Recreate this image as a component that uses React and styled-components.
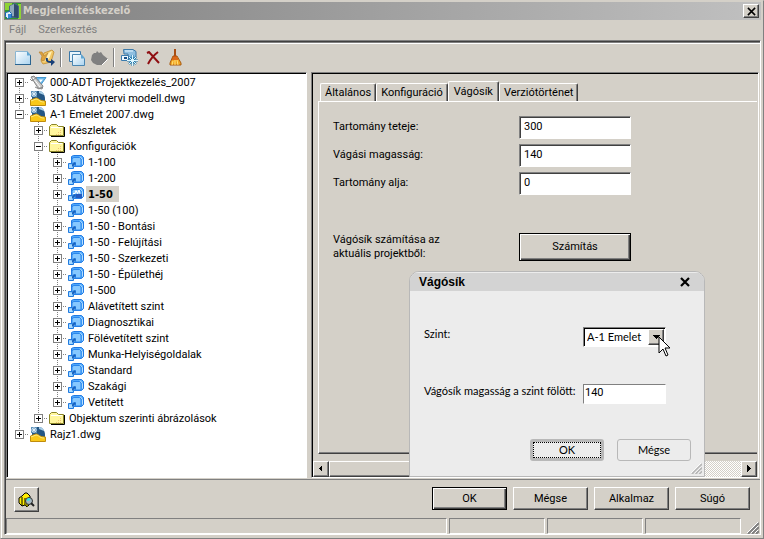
import React, { useState } from "react";
import styled, { createGlobalStyle, css } from "styled-components";

const face = "#d4d0c8";
const uiFont = 'Roboto, "Liberation Sans", sans-serif';
const boldFont = '"DejaVu Sans Condensed", "Liberation Sans", sans-serif';
const dialogFont = 'Lato, "Liberation Sans", sans-serif';
const dialogTitleFont = '"Liberation Sans", Arial, sans-serif';

const GlobalStyle = createGlobalStyle`
  * { box-sizing: border-box; }
  body { margin: 0; background: ${face}; }
  button, input, select { font: inherit; color: inherit; margin: 0; padding: 0; border-radius: 0; }
  svg { display: block; flex: none; }
`;

const raised = css`
  border: 1px solid;
  border-color: #fff #404040 #404040 #fff;
  box-shadow: inset -1px -1px #808080;
  background: ${face};
`;

const Window = styled.div`
  position: relative;
  display: flex;
  flex-direction: column;
  min-height: 100vh;
  padding: 1px 2px 3px 3px;
  border: 1px solid;
  border-color: ${face} #808080 #808080 ${face};
  box-shadow: inset 1px 0 #fff;
  background: ${face};
  color: #000;
  font: 11px/16px ${uiFont};
`;

const TitleBar = styled.header`
  display: flex;
  align-items: center;
  height: 18px;
  padding: 0 2px 0 1px;
  background: linear-gradient(90deg, #808080, #c0c0c0);
`;

const Title = styled.h1`
  flex: 1;
  margin: 0 0 0 2px;
  color: ${face};
  font: bold 11px/18px ${boldFont};
`;

const CloseButton = styled.button`
  ${raised}
  display: grid;
  place-items: center;
  width: 16px;
  height: 14px;
`;

const MenuBar = styled.nav`
  display: flex;
  gap: 12px;
  height: 20px;
  padding-left: 5px;
  color: #808080;
`;

const MenuButton = styled.button`
  border: 0;
  background: none;
  line-height: 20px;
`;

const Frame = styled.main`
  display: flex;
  flex: 1;
  flex-direction: column;
  padding: 1px 0 0 1px;
  border: 1px solid;
  border-color: #808080 #fff #fff #808080;
  box-shadow: inset 1px 1px #404040;
`;

const Toolbar = styled.div`
  display: flex;
  align-items: center;
  height: 30px;
  padding: 0 0 0 6px;
  border-top: 1px solid #808080;
  box-shadow: inset 0 1px #fff;
`;

const ToolButton = styled.button`
  display: grid;
  place-items: center;
  width: 23px;
  height: 22px;
  border: 0;
  background: none;
`;

const Separator = styled.span`
  width: 2px;
  height: 19px;
  margin: 0 3px 0 2px;
  border-left: 1px solid #808080;
  border-right: 1px solid #fff;
`;

const Panes = styled.div`
  display: grid;
  flex: 1;
  grid-template-columns: 301px minmax(0, 1fr);
  gap: 4px;
  padding-right: 1px;
`;

const sunken = css`
  border: 1px solid;
  border-color: #808080 #fff #fff #808080;
  box-shadow: inset 1px 1px #000;
`;

const TreePane = styled.ul`
  ${sunken}
  margin: 0;
  padding: 1px 1px 1px 3px;
  background: #fff;
  list-style: none;
`;

const TreeRow = styled.li`
  display: flex;
  align-items: center;
  height: 16px;
`;

const Guide = styled.span`
  display: grid;
  place-items: center;
  width: 19px;
  height: 16px;
  background-image:
    ${(p) => (p.$branch ? "repeating-linear-gradient(90deg, #808080 0 1px, transparent 1px 2px)," : "")}
    repeating-linear-gradient(#808080 0 1px, transparent 1px 2px);
  background-repeat: no-repeat;
  background-size: ${(p) => (p.$branch ? "10px 1px, " : "")}1px ${(p) => (p.$part === "all" ? "16px" : "8px")};
  background-position: ${(p) => (p.$branch ? "9px 8px, " : "")}9px ${(p) => (p.$part === "lower" ? "8px" : "0")};
`;

const Toggle = styled.button`
  display: grid;
  place-items: center;
  width: 9px;
  height: 9px;
  border: 1px solid #808080;
  background: #fff;
`;

const IconSlot = styled.span`
  display: grid;
  place-items: center;
  width: 18px;
  height: 16px;
`;

const NodeLabel = styled.span`
  margin-left: 1px;
  padding: 2px 3px 0 2px;
  line-height: 14px;
  white-space: nowrap;
  ${(p) => p.$selected && css`
    padding-right: 6px;
    background: ${face};
    font-weight: bold;
    font-family: ${boldFont};
  `}
`;

const DetailPane = styled.section`
  ${sunken}
  display: flex;
  flex-direction: column;
  min-width: 0;
  padding: 8px 1px 0 1px;
`;

const Tabs = styled.div`
  display: flex;
  align-items: flex-end;
  padding-left: 7px;
`;

const Tab = styled.button`
  height: ${(p) => (p.$active ? "21px" : "18px")};
  margin-bottom: ${(p) => (p.$active ? "-1px" : "0")};
  padding: 0 ${(p) => (p.$active ? "5px" : "4px")};
  border: 1px solid;
  border-color: #fff #404040 transparent #fff;
  border-bottom: 0;
  border-radius: 2px 2px 0 0;
  box-shadow: inset -1px 0 #808080;
  background: ${face};
  white-space: nowrap;
`;

const TabPage = styled.form`
  flex: 1;
  margin-left: 5px;
  padding: 11px 14px;
  border-top: 1px solid #fff;
  border-left: 1px solid #fff;
  border-bottom: 1px solid #404040;
  box-shadow: inset 0 -1px #808080;
`;

const FieldRow = styled.div`
  display: grid;
  grid-template-columns: 186px 112px;
  align-items: center;
  min-height: 28px;
  margin-top: ${(p) => (p.$apart ? "36px" : "0")};
  line-height: 14px;
`;

const TextBox = styled.input`
  height: ${(p) => (p.$compact ? "20px" : "23px")};
  width: 100%;
  min-width: 0;
  padding: 0 4px 2px;
  border: 1px solid;
  border-color: #808080 #fff #fff #808080;
  background: #fff;
  box-shadow: inset 1px 1px #404040;
  outline: none;
  ${(p) => p.$compact && css`
    padding: 0 0 3px 1px;
    box-shadow: none;
    font-family: ${uiFont};
  `}
`;

const PushButton = styled.button`
  ${raised}
  height: 23px;
  min-width: 75px;
  ${(p) => p.$primary && css`
    border-color: #000;
    box-shadow: inset 1px 1px #fff, inset -1px -1px #404040, inset -2px -2px #808080;
  `}
  ${(p) => p.$tall && css`
    height: 28px;
  `}
`;

const ScrollBar = styled.div`
  display: flex;
  height: 16px;
  margin-top: 7px;
  background: repeating-conic-gradient(#fff 0 25%, ${face} 0 50%) 0 0 / 2px 2px;
`;

const ScrollButton = styled.button`
  ${raised}
  display: grid;
  place-items: center;
  width: 16px;
`;

const ScrollThumb = styled.div`
  ${raised}
  width: 60%;
`;

const ScrollSpace = styled.div`
  flex: 1;
`;

const Footer = styled.footer`
  display: flex;
  gap: 6px;
  align-items: flex-start;
  height: 39px;
  margin-top: 1px;
  padding: 7px 10px 0 8px;
  border-top: 1px solid #808080;
`;

const SearchButton = styled.button`
  ${raised}
  display: grid;
  place-items: center;
  width: 25px;
  height: 25px;
  margin-right: auto;
`;

const StatusBar = styled.div`
  display: grid;
  grid-template-columns: minmax(0, 1fr) 96px 96px 96px 16px;
  gap: 2px;
  height: 16px;
  padding-right: 1px;
`;

const StatusCell = styled.div`
  border: 1px solid;
  border-color: #808080 #fff #fff #808080;
`;

const GripCell = styled.div`
  display: flex;
  align-items: flex-end;
  justify-content: flex-end;
`;

const Dialog = styled.section`
  position: absolute;
  top: 270px;
  left: 408px;
  width: 296px;
  overflow: hidden;
  border: 1px solid #b8b8b8;
  border-radius: 10px 10px 0 0;
  background: #ececec;
  font: 11px/14px ${dialogFont};
`;

const DialogTitleBar = styled.header`
  display: flex;
  align-items: center;
  height: 19px;
  padding: 0 14px 0 9px;
  border-top: 1px solid #ececec;
  background: #d3d3d3;
`;

const DialogTitle = styled.h2`
  flex: 1;
  margin: 0;
  font: bold 12px/18px ${dialogTitleFont};
`;

const PlainButton = styled.button`
  border: 0;
  background: none;
`;

const DialogBody = styled.form`
  padding: 36px 0 0 14px;
`;

const DialogRow = styled.div`
  display: grid;
  grid-template-columns: 159px 83px;
  align-items: start;
  margin-bottom: 37px;
  white-space: nowrap;
`;

const Combo = styled.div`
  ${sunken}
  display: flex;
  height: 20px;
  padding: 1px;
  background: #fff;
`;

const ComboSelect = styled.select`
  flex: 1;
  min-width: 0;
  padding-left: 2px;
  border: 0;
  background: none;
  appearance: none;
  outline: none;
`;

const ComboArrow = styled.span`
  ${raised}
  display: grid;
  place-items: center;
  width: 16px;
`;

const DialogActions = styled.div`
  display: flex;
  gap: 13px;
  justify-content: flex-end;
  margin-top: -2px;
  padding-right: 13px;
`;

const FlatButton = styled.button`
  width: 74px;
  height: 22px;
  border: 1px solid #b8b8b8;
  border-radius: 3px;
  background: #ececec;
  ${(p) => p.$focused && css`
    border-width: 3px;
    outline: 1px dotted #000;
    outline-offset: -4px;
  `}
`;

const DialogGrip = styled.div`
  display: flex;
  justify-content: flex-end;
  padding: 2px 2px 2px 0;
`;

const Pointer = styled.svg`
  position: absolute;
  top: 335px;
  left: 657px;
`;

function AppIcon() {
  return (
    <svg width="16" height="16" viewBox="0 0 16 16">
      <path d="M0 0h16v16H0z" fill="#2f9930" />
      <path d="M0 0h7v7H0zM13 1h3v15h-3z" fill="#8ed334" />
      <path d="M4 3l6-3 4 3v12H4z" fill="#496583" />
      <path d="M5 3l4-2v12H5z" fill="#8fa9bb" />
      <path d="M9 1l4 2v12l-4-1z" fill="#314b6d" />
      <path d="M.5 9.500l4-1 2 2v4l-4 1-2-2z" fill="#e4f2fb" stroke="#1764b5" />
      <path d="M3 11h3v4H3z" fill="#3386db" />
    </svg>
  );
}

function Cross({ size, color, weight }) {
  return (
    <svg width={size} height={size} viewBox="0 0 10 10">
      <path d="M1 1l8 8M9 1L1 9" stroke={color} strokeWidth={weight} fill="none" />
    </svg>
  );
}

function NewIcon() {
  return (
    <svg width="17" height="14" viewBox="0 0 17 14">
      <defs>
        <linearGradient id="paper" x2="1" y2="1">
          <stop stopColor="#fff" />
          <stop offset="1" stopColor="#a9d3ef" />
        </linearGradient>
      </defs>
      <path d="M.5 .5H12l3.500 4v9H.5z" fill="url(#paper)" stroke="#8bb6d2" />
      <path d="M0 13.500h16M15.500 4v10" stroke="#2b6490" />
      <path d="M12 0v4.500h4z" fill="#5fa5d2" />
    </svg>
  );
}

function EditIcon() {
  return (
    <svg width="18" height="17" viewBox="0 0 18 17">
      <path d="M6 4l8-3 2 2-3 10-8 2-2-3z" fill="#f3c763" stroke="#c99a45" />
      <path d="M7 6l7-4-3 8-6 3z" fill="#fff0b8" />
      <path d="M1 3l3 0 2 4 4-3-4 8-3-1 1-4z" fill="#dfa33b" stroke="#b98535" strokeWidth=".7" />
      <path d="M9 9c-1 4 2 4 4 4" fill="none" stroke="#173f78" strokeWidth="2" />
      <path d="M13 10l4 3-4 4z" fill="#173f78" />
    </svg>
  );
}

function CopyIcon() {
  return (
    <svg width="18" height="16" viewBox="0 0 18 16">
      <path d="M1.500 1.500h11v10h-11z" fill="#e9f5fc" stroke="#3b78a8" />
      <path d="M4.500 4.500H13l3.500 4v7h-12z" fill="url(#paper)" stroke="#4b86b1" />
      <path d="M13 4v4.500h4z" fill="#5fa5d2" />
    </svg>
  );
}

function PasteIcon() {
  return (
    <svg width="17" height="16" viewBox="0 0 17 16">
      <path d="M3 3h2l1-2 2 2 2-1 2 3 5 4-6 6H6l-4-2-2-3 1-5z" fill="#808080" />
      <path d="M17 9l-6 6" stroke="#fff" />
    </svg>
  );
}

function UpdateIcon() {
  return (
    <svg width="18" height="17" viewBox="0 0 18 17">
      <path d="M2.500 .5H12l3 2V9H7V5H3z" fill="#8fbfe0" stroke="#3c79a8" />
      <path d="M4 2h8" stroke="#e8f6ff" />
      <path d="M.5 6.500h7v5h-7z" fill="#f0f9ff" stroke="#397bae" />
      <path d="M3 8h3v2H3z" fill="#174f86" />
      <path d="M11.500 6v11M6 11.500h11M8 8l7 7M15 8l-7 7" stroke="#267bae" strokeWidth="2" />
      <path d="M11.500 6v11M6 11.500h11M8 8l7 7M15 8l-7 7" stroke="#dff7ff" />
    </svg>
  );
}

function DeleteIcon() {
  return (
    <svg width="14" height="14" viewBox="0 0 14 14">
      <path d="M1 2l2-1 10 11M12 1C8 4 4 9 2 13" fill="none" stroke="#8f0e12" strokeWidth="2" />
    </svg>
  );
}

function BroomIcon() {
  return (
    <svg width="13" height="17" viewBox="0 0 13 17">
      <path d="M5 0h2v8H5z" fill="#a94e13" />
      <path d="M4 7h4l4 7v2H1v-2z" fill="#f2a521" stroke="#a75910" />
      <path d="M4 8h4M3 10h6" stroke="#c62f13" />
      <path d="M4 12l-1 4M6 11v5M8 11l1 5" stroke="#ffe27c" />
    </svg>
  );
}

function ProjectIcon() {
  return (
    <svg width="17" height="16" viewBox="0 0 17 16">
      <path d="M5 3.500h11L10 12z" fill="#6db8e8" stroke="#4596cd" />
      <path d="M9 5.500h4l-2.500 3z" fill="#fff" />
      <path d="M1 3l3-1 9 10-1 3-4-1z" fill="#c8c8c8" stroke="#858585" />
      <path d="M3 4l7 9" stroke="#fff" />
      <path d="M0 5l2 2 5-4M5 13l4 2 3-2" fill="none" stroke="#888" />
    </svg>
  );
}

function DrawingIcon() {
  return (
    <svg width="16" height="16" viewBox="0 0 16 16">
      <path d="M2 1h8c3 1 5 4 5 8v6H2z" fill="#255784" />
      <path d="M9 1c3 0 5 2 5 4l-5-2z" fill="#a9cee7" />
      <path d="M1 1h6v6H1z" fill="#5d91b9" />
      <path d="M4 1v6M1 4h6M2 2l4 4M6 2L2 6" stroke="#e6f3fb" strokeWidth=".8" />
      <path d="M.5 15.500V10L6 8c3 0 3 3 9.500 3v4.500z" fill="#f9c81a" stroke="#c08c0c" />
      <path d="M1 11l5-2c3 0 3 3 8 3" fill="none" stroke="#ffeb85" />
    </svg>
  );
}

function FolderIcon() {
  return (
    <svg width="16" height="14" viewBox="0 0 16 14">
      <path d="M2 13.500h13.500V4" fill="none" stroke="#000" />
      <path d="M.5 12.500V3.500l2-2h5l2 2h5v9z" fill="#fff69d" stroke="#8a8528" />
      <path d="M2 4.500h11" stroke="#fff" />
      <path d="M7 11.500h6M9 9.500h4M11 7.500h2" stroke="#efbf79" strokeDasharray="1 1" />
    </svg>
  );
}

function ConfigIcon({ current }) {
  return (
    <svg width="16" height="14" viewBox="0 0 16 14">
      <path d="M3.500 1.500l2-1h8l2 2v7l-2 2h-10z" fill="#4fa8fb" stroke="#1f79e4" />
      <path d="M4 4.500q0-2 2-2h5.500l1.500 1.500v7H4z" fill="#86c8ff" stroke="#2a86ec" />
      <path d="M12 1.500l2.500 3v5" fill="none" stroke="#b5deff" />
      {current && <path d="M6 7h8v4H6z" fill="#2459bd" />}
      {current && <path d="M5 6.500h2l1-3 1.500 3L11 3l1 3.500" fill="none" stroke="#fff" />}
      <path d="M.5 8.500h4l2-1h1v3l-2 1v2h-5z" fill="#8bcbff" stroke="#207be0" />
      <path d="M4 11l3-3" stroke="#1660bd" strokeWidth="2" />
      <path d="M1 10h3v3H1z" fill="#a8d9ff" />
    </svg>
  );
}

function SearchIcon() {
  return (
    <svg width="17" height="16" viewBox="0 0 17 16">
      <path d="M1 6l3-2 3-3h2l3 3v8l-3 3-2-2-3 1-3-3z" fill="#ffed00" stroke="#000" />
      <path d="M4 5v9M7 6v7" fill="none" stroke="#000" />
      <path d="M7 7l3 2v6l-3-2z" fill="#8d8500" />
      <circle cx="11" cy="9" r="3.500" fill="#a7b8c1" stroke="#333" />
      <path d="M9 8l3-1" stroke="#22e7ed" strokeWidth="2" />
      <path d="M13 11l3 3" stroke="#222" strokeWidth="2" />
    </svg>
  );
}

function Triangle({ path }) {
  return (
    <svg width="8" height="8" viewBox="0 0 8 8" shapeRendering="crispEdges">
      <path d={path} fill="#000" />
    </svg>
  );
}

function Grip({ color, size }) {
  return (
    <svg width={size} height={size} viewBox="0 0 12 12">
      <path d="M1 12L12 1M5 12l7-7M9 12l3-3" stroke={color} strokeWidth="2" />
      <path d="M0 11L11 0M4 11l7-7M8 11l3-3" stroke="#fff" />
    </svg>
  );
}

const icons = { project: ProjectIcon, drawing: DrawingIcon, folder: FolderIcon, config: ConfigIcon };

const nodes = [
  { text: "000-ADT Projektkezelés_2007", icon: "project", guides: ["lower"] },
  { text: "3D Látványtervi modell.dwg", icon: "drawing", guides: ["all"] },
  { text: "A-1 Emelet 2007.dwg", icon: "drawing", guides: ["all"], open: true },
  { text: "Készletek", icon: "folder", guides: ["all", "all"] },
  { text: "Konfigurációk", icon: "folder", guides: ["all", "all"], open: true },
  ...[
    "1-100", "1-200", "1-50", "1-50 (100)", "1-50 - Bontási", "1-50 - Felújítási",
    "1-50 - Szerkezeti", "1-50 - Épülethéj", "1-500", "Alávetített szint", "Diagnosztikai",
    "Fölévetített szint", "Munka-Helyiségoldalak", "Standard", "Szakági", "Vetített",
  ].map((text, i, all) => ({
    text,
    icon: "config",
    selected: text === "1-50",
    guides: ["all", "all", i === all.length - 1 ? "upper" : "all"],
  })),
  { text: "Objektum szerinti ábrázolások", icon: "folder", guides: ["all", "upper"] },
  { text: "Rajz1.dwg", icon: "drawing", guides: ["upper"] },
];

function TreeNode({ node }) {
  const Icon = icons[node.icon];
  const depth = node.guides.length - 1;
  return (
    <TreeRow role="treeitem" aria-level={depth + 1} aria-expanded={!!node.open} aria-selected={!!node.selected}>
      {node.guides.map((part, i) => (
        <Guide key={i} $part={part} $branch={i === depth}>
          {i === depth && (
            <Toggle type="button" aria-label={node.text}>
              <svg width="5" height="5" viewBox="0 0 5 5" shapeRendering="crispEdges">
                <path d={node.open ? "M0 2h5v1H0z" : "M0 2h5v1H0zM2 0h1v5H2z"} />
              </svg>
            </Toggle>
          )}
        </Guide>
      ))}
      <IconSlot>
        <Icon current={node.selected} />
      </IconSlot>
      <NodeLabel $selected={node.selected}>{node.text}</NodeLabel>
    </TreeRow>
  );
}

const tools = [
  ["Új", NewIcon], ["Szerkesztés", EditIcon], null,
  ["Másolás", CopyIcon], ["Beillesztés", PasteIcon], null,
  ["Frissítés", UpdateIcon], ["Törlés", DeleteIcon], ["Tisztítás", BroomIcon],
];

const tabs = ["Általános", "Konfiguráció", "Vágósík", "Verziótörténet"];

const fields = [
  ["top", "Tartomány teteje:", "300"],
  ["cut", "Vágási magasság:", "140"],
  ["bottom", "Tartomány alja:", "0"],
];

export default function App() {
  const [active, setActive] = useState("Vágósík");
  return (
    <>
      <GlobalStyle />
      <Window>
        <TitleBar>
          <AppIcon />
          <Title>Megjelenítéskezelő</Title>
          <CloseButton type="button" aria-label="Bezárás"><Cross size="9" color="#000" weight="1.700" /></CloseButton>
        </TitleBar>
        <MenuBar>
          <MenuButton type="button">Fájl</MenuButton>
          <MenuButton type="button">Szerkesztés</MenuButton>
        </MenuBar>
        <Frame>
          <Toolbar role="toolbar">
            {tools.map((tool, i) => {
              if (!tool) return <Separator key={i} />;
              const [name, Icon] = tool;
              return <ToolButton key={i} type="button" aria-label={name}><Icon /></ToolButton>;
            })}
          </Toolbar>
          <Panes>
            <TreePane role="tree">
              {nodes.map((node) => <TreeNode key={node.text} node={node} />)}
            </TreePane>
            <DetailPane>
              <Tabs role="tablist">
                {tabs.map((name) => (
                  <Tab key={name} type="button" role="tab" aria-selected={name === active} $active={name === active} onClick={() => setActive(name)}>
                    {name}
                  </Tab>
                ))}
              </Tabs>
              <TabPage>
                {fields.map(([id, label, value]) => (
                  <FieldRow key={id}>
                    <label htmlFor={id}>{label}</label>
                    <TextBox id={id} defaultValue={value} />
                  </FieldRow>
                ))}
                <FieldRow $apart>
                  <span>Vágósík számítása az<br />aktuális projektből:</span>
                  <PushButton type="button" $primary $tall>Számítás</PushButton>
                </FieldRow>
              </TabPage>
              <ScrollBar>
                <ScrollButton type="button" aria-label="Balra"><Triangle path="M5 0v7L2 3.500z" /></ScrollButton>
                <ScrollThumb />
                <ScrollSpace />
                <ScrollButton type="button" aria-label="Jobbra"><Triangle path="M2 0v7l4-3.500z" /></ScrollButton>
              </ScrollBar>
            </DetailPane>
          </Panes>
          <Footer>
            <SearchButton type="button" aria-label="Keresés"><SearchIcon /></SearchButton>
            <PushButton type="button" $primary>OK</PushButton>
            <PushButton type="button">Mégse</PushButton>
            <PushButton type="button">Alkalmaz</PushButton>
            <PushButton type="button">Súgó</PushButton>
          </Footer>
          <StatusBar>
            <StatusCell /><StatusCell /><StatusCell /><StatusCell />
            <GripCell><Grip color="#808080" size="12" /></GripCell>
          </StatusBar>
        </Frame>
        <Dialog role="dialog" aria-labelledby="dialog-title">
          <DialogTitleBar>
            <DialogTitle id="dialog-title">Vágósík</DialogTitle>
            <PlainButton type="button" aria-label="Bezárás"><Cross size="10" color="#000" weight="2.200" /></PlainButton>
          </DialogTitleBar>
          <DialogBody>
            <DialogRow>
              <label htmlFor="level">Szint:</label>
              <Combo>
                <ComboSelect id="level"><option>A-1 Emelet</option></ComboSelect>
                <ComboArrow><Triangle path="M0 2h8L4 6z" /></ComboArrow>
              </Combo>
            </DialogRow>
            <DialogRow>
              <label htmlFor="height">Vágósík magasság a szint fölött:</label>
              <TextBox id="height" defaultValue="140" $compact />
            </DialogRow>
            <DialogActions>
              <FlatButton type="button" $focused>OK</FlatButton>
              <FlatButton type="button">Mégse</FlatButton>
            </DialogActions>
            <DialogGrip><Grip color="#b8b8b8" size="11" /></DialogGrip>
          </DialogBody>
        </Dialog>
        <Pointer width="13" height="21" viewBox="0 0 13 21">
          <path d="M1 1v16l4-4 3 7 2-1-3-7h5z" fill="#fff" stroke="#000" />
        </Pointer>
      </Window>
    </>
  );
}
